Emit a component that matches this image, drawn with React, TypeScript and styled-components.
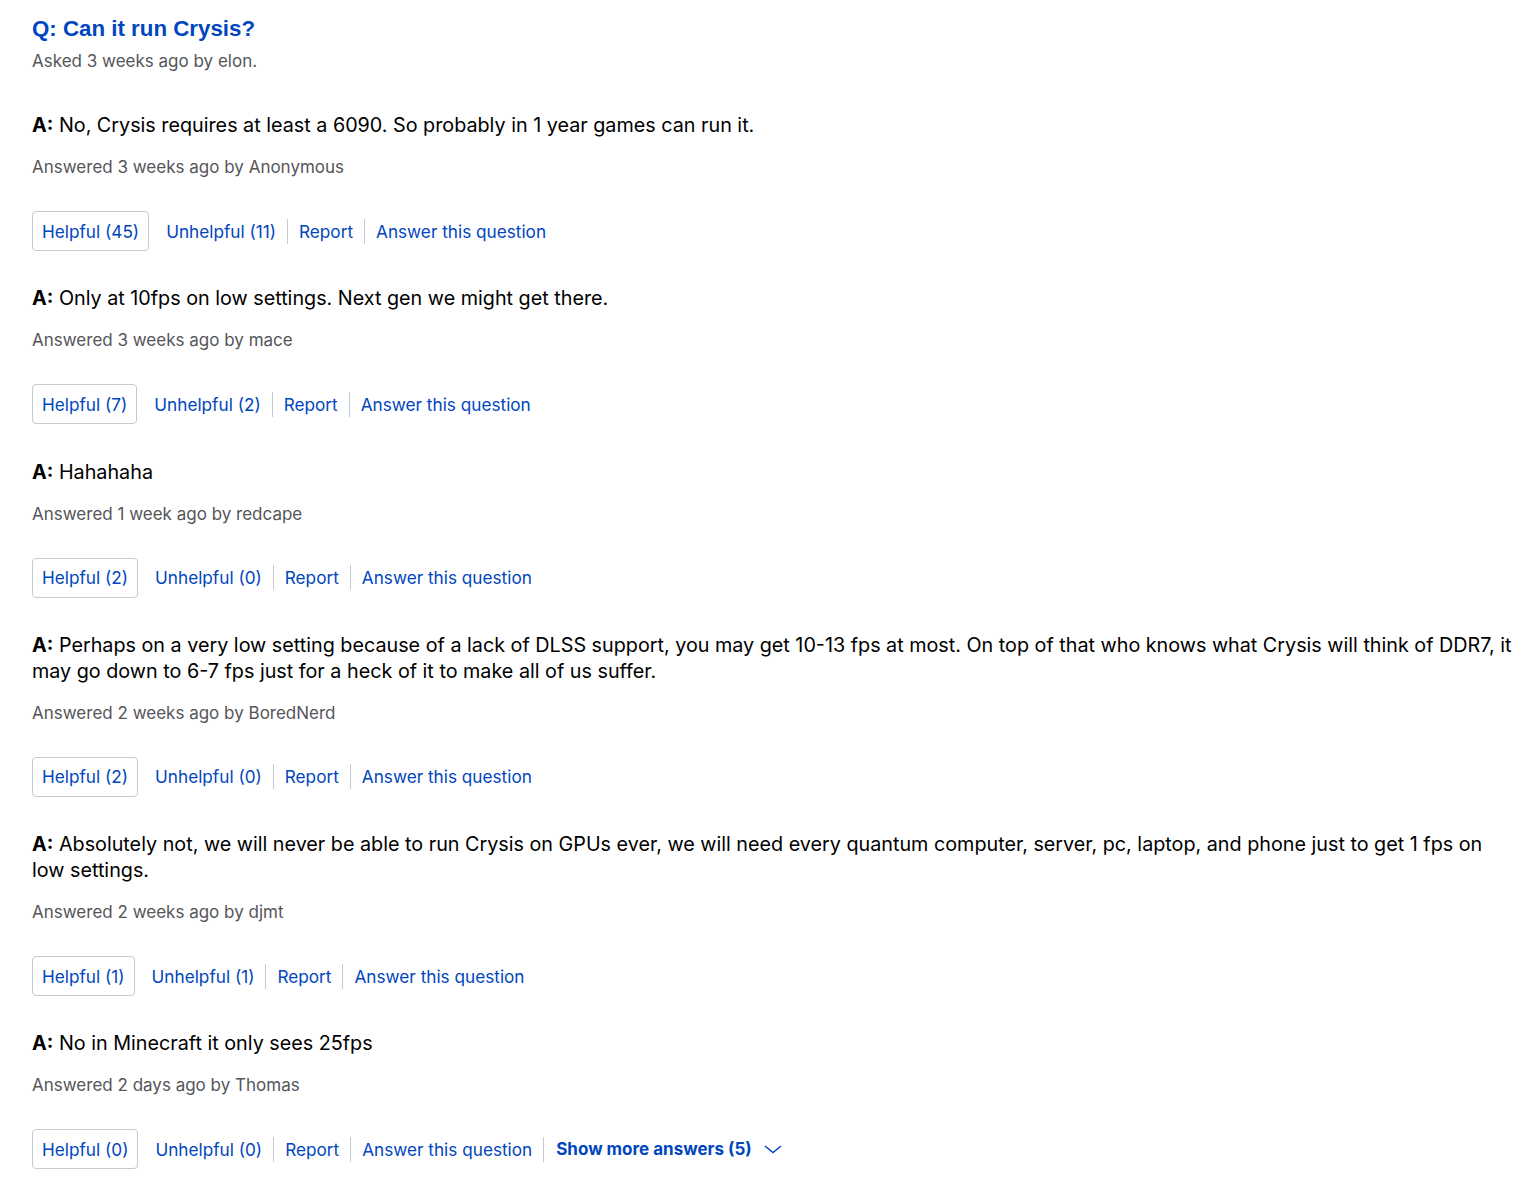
import React from 'react'
import styled, { createGlobalStyle } from 'styled-components'

const GlobalStyle = createGlobalStyle`
    body {
        margin: 0;
        background: #ffffff;
        font-family: Inter, "Noto Sans", sans-serif;
    }
`

const Page = styled.div`
    padding: 15px 10px 16px 32px;
    color: #1d252c;
`

const Title = styled.h2`
    margin: 0;
    font-family: "Liberation Sans", Arial, sans-serif;
    font-weight: bold;
    font-size: 22.3px;
    line-height: 28px;
    color: #0046be;
`

const Meta = styled.div<{ $top: number }>`
    margin-top: ${(p) => p.$top}px;
    font-size: 17px;
    line-height: 24px;
    color: #55555a;
`

const AnswerList = styled.div`
    display: flex;
    flex-direction: column;
    gap: 34.3px;
    margin-top: 39px;
`

const Answer = styled.div`
    display: flex;
    flex-direction: column;
`

const AnswerText = styled.div`
    font-size: 19.75px;
    line-height: 26px;
    color: #000000;

    b {
        font-weight: 700;
    }
`

const Actions = styled.div`
    display: flex;
    align-items: center;
    margin-top: 32px;
    height: 40px;
`

const HelpfulButton = styled.button`
    height: 40px;
    padding: 0 9px;
    margin-right: 6px;
    border: 1px solid #c5cbd5;
    border-radius: 4px;
    background: #ffffff;
    font-family: inherit;
    font-size: 17.2px;
    color: #0046be;
    cursor: pointer;
`

const ActionLink = styled.a<{ $divider?: boolean }>`
    display: flex;
    align-items: center;
    height: 25px;
    padding: 0 11px;
    font-size: 17.2px;
    color: #0046be;
    text-decoration: none;
    cursor: pointer;
    border-left: ${(p) => (p.$divider ? '1px solid #c5cbd5' : 'none')};
`

const ShowMore = styled(ActionLink)`
    font-weight: 700;
    font-size: 17px;
    gap: 12px;
    padding-left: 12px;

    svg {
        width: 18px;
        height: 18px;
    }
`

type AnswerData = {
    text: string
    when: string
    by: string
    helpful: number
    unhelpful: number
}

const answers: AnswerData[] = [
    {
        text: 'No, Crysis requires at least a 6090. So probably in 1 year games can run it.',
        when: '3 weeks ago',
        by: 'Anonymous',
        helpful: 45,
        unhelpful: 11,
    },
    {
        text: 'Only at 10fps on low settings. Next gen we might get there.',
        when: '3 weeks ago',
        by: 'mace',
        helpful: 7,
        unhelpful: 2,
    },
    {
        text: 'Hahahaha',
        when: '1 week ago',
        by: 'redcape',
        helpful: 2,
        unhelpful: 0,
    },
    {
        text: 'Perhaps on a very low setting because of a lack of DLSS support, you may get 10-13 fps at most. On top of that who knows what Crysis will think of DDR7, it may go down to 6-7 fps just for a heck of it to make all of us suffer.',
        when: '2 weeks ago',
        by: 'BoredNerd',
        helpful: 2,
        unhelpful: 0,
    },
    {
        text: 'Absolutely not, we will never be able to run Crysis on GPUs ever, we will need every quantum computer, server, pc, laptop, and phone just to get 1 fps on low settings.',
        when: '2 weeks ago',
        by: 'djmt',
        helpful: 1,
        unhelpful: 1,
    },
    {
        text: 'No in Minecraft it only sees 25fps',
        when: '2 days ago',
        by: 'Thomas',
        helpful: 0,
        unhelpful: 0,
    },
]

function Chevron() {
    return (
        <svg viewBox="0 0 18 18" fill="none" stroke="#0046be" strokeWidth="1.5">
            <path d="M1 6l8 6.5 8-6.5" />
        </svg>
    )
}

export default function App() {
    return (
        <Page>
            <GlobalStyle />
            <Title>Q: Can it run Crysis?</Title>
            <Meta $top={6}>Asked 3 weeks ago by elon.</Meta>
            <AnswerList>
                {answers.map((a, i) => (
                    <Answer key={i}>
                        <AnswerText>
                            <b>A:</b> {a.text}
                        </AnswerText>
                        <Meta $top={17}>
                            Answered {a.when} by {a.by}
                        </Meta>
                        <Actions>
                            <HelpfulButton>Helpful ({a.helpful})</HelpfulButton>
                            <ActionLink>Unhelpful ({a.unhelpful})</ActionLink>
                            <ActionLink $divider>Report</ActionLink>
                            <ActionLink $divider>Answer this question</ActionLink>
                            {i === answers.length - 1 && (
                                <ShowMore $divider>
                                    Show more answers (5)
                                    <Chevron />
                                </ShowMore>
                            )}
                        </Actions>
                    </Answer>
                ))}
            </AnswerList>
        </Page>
    )
}
